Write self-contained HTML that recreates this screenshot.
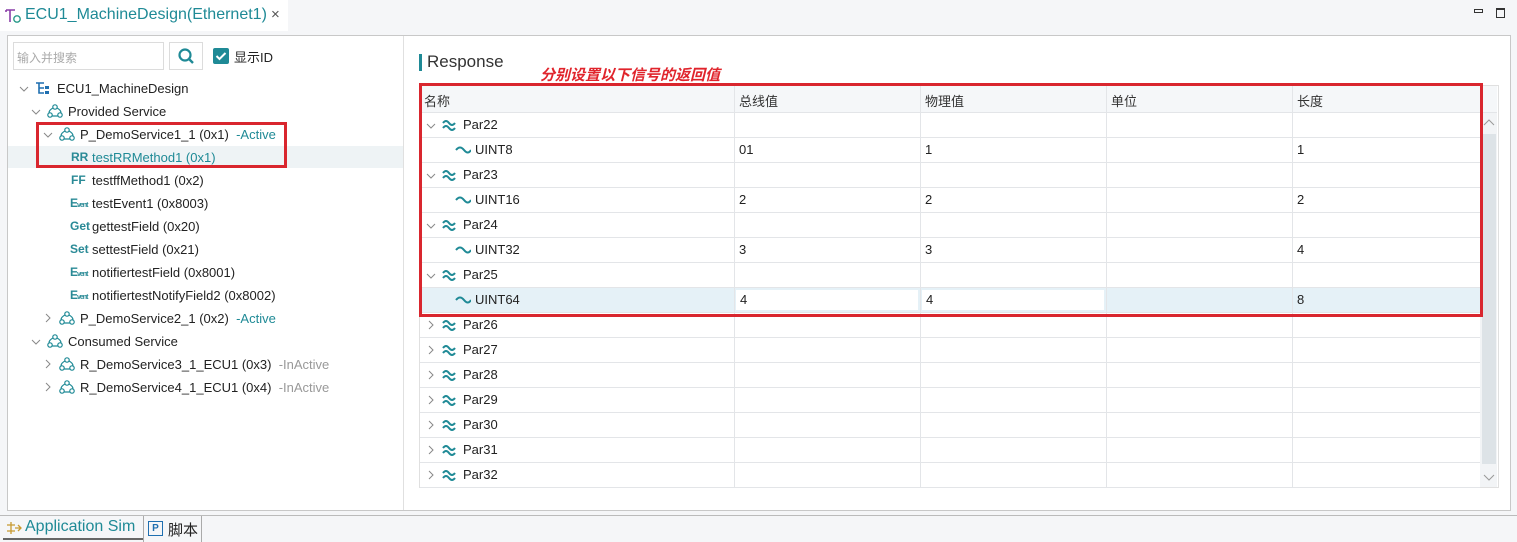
<!DOCTYPE html>
<html><head><meta charset="utf-8"><style>
*{box-sizing:border-box;margin:0;padding:0}
body{width:1517px;height:542px;overflow:hidden;background:#f5f6f8;font-family:"Liberation Sans","Noto Sans CJK SC",sans-serif;font-size:13px;color:#222;position:relative}
.a{position:absolute;white-space:nowrap}
.tr{position:absolute;height:23px;line-height:23px;white-space:nowrap}
.chev{position:absolute}
.row{position:absolute;left:420px;width:1060px;height:25px;border-bottom:1px solid #e3e5e8;line-height:24px}
.row .c{position:absolute;top:0;height:24px;border-left:1px solid #e3e5e8}
.lbl{font-weight:bold;color:#2a8a96;font-size:12px;position:absolute}
.ev{font-weight:bold;color:#2a8a96;font-size:12px;position:absolute;letter-spacing:-1px}
</style></head><body>
<svg width="0" height="0" style="position:absolute"><defs><g id="sv"><circle cx="8" cy="4" r="2.2" stroke="#1f8a96" fill="none" stroke-width="1.2"/><circle cx="3" cy="12" r="2.2" stroke="#1f8a96" fill="none" stroke-width="1.2"/><circle cx="13" cy="12" r="2.2" stroke="#1f8a96" fill="none" stroke-width="1.2"/><path d="M6 5Q2 7 2 10M10 5Q14 7 14 10M5 13h6" stroke="#1f8a96" fill="none" stroke-width="1.2"/></g>
<g id="w2"><path d="M1 5q3-4 6 0t6 0M1 10q3-4 6 0t6 0" stroke="#1f8a96" stroke-width="2" fill="none"/></g>
<g id="w1"><path d="M1 7q4-5 8 0t7 0" stroke="#1f8a96" stroke-width="2" fill="none"/></g>
<path id="cd" d="M1 3l4 4 4-4" stroke="#888" fill="none" stroke-width="1"/>
<path id="cr" d="M3 1l4 4-4 4" stroke="#888" fill="none" stroke-width="1"/></defs></svg>
<!-- top tab -->
<div class="a" style="left:0;top:0;width:288px;height:31px;background:#fff"></div>
<svg class="a" style="left:5px;top:8px" width="16" height="16"><path d="M1 2h9M5 2v12M1 2v2" stroke="#8a3ea8" stroke-width="1.6" fill="none"/><circle cx="12" cy="11" r="3.2" stroke="#2a9a8a" stroke-width="1.4" fill="none"/></svg>
<div class="a" style="left:25px;top:6px;font-size:16px;color:#1f8a96">ECU1_MachineDesign(Ethernet1)</div>
<div class="a" style="left:271px;top:6px;font-size:15px;color:#555">×</div>
<div class="a" style="left:1474px;top:9px;width:9px;height:4px;border:1px solid #333"></div>
<div class="a" style="left:1496px;top:8px;width:9px;height:10px;border:1px solid #333;border-top-width:2px"></div>
<!-- main frame -->
<div class="a" style="left:7px;top:35px;width:1504px;height:476px;background:#fff;border:1px solid #c8c8c8"></div>
<div class="a" style="left:403px;top:36px;width:1px;height:474px;background:#e0e0e0"></div>
<!-- search -->
<div class="a" style="left:13px;top:42px;width:151px;height:28px;border:1px solid #dcdcdc;color:#aaa;padding:6px 3px;font-size:12px">输入并搜索</div>
<div class="a" style="left:169px;top:42px;width:34px;height:28px;border:1px solid #dcdcdc"></div>
<svg class="a" style="left:177px;top:47px" width="18" height="18"><circle cx="8" cy="8" r="5.5" stroke="#1f8a96" stroke-width="2.2" fill="none"/><path d="M12 12l4 4" stroke="#1f8a96" stroke-width="2.4"/></svg>
<div class="a" style="left:213px;top:48px;width:16px;height:16px;background:#1f8a96;border-radius:2px"></div>
<svg class="a" style="left:213px;top:48px" width="16" height="16"><path d="M3.5 8l3 3 6-6" stroke="#fff" stroke-width="2" fill="none"/></svg>
<div class="a" style="left:234px;top:47px">显示ID</div>
<!-- tree -->
<div class="a" style="left:8px;top:146px;width:395px;height:22px;background:#eef3f5"></div>
<div class="a" style="left:36px;top:122px;width:251px;height:46px;border:3px solid #d9262e"></div>
<svg class="chev" style="left:19px;top:84px" width="10" height="10"><use href="#cd"/></svg>
<svg class="a" style="left:35px;top:81px" width="16" height="14"><path d="M1 2h8M4 2v10h5M4 7h5" stroke="#1f6fb0" stroke-width="1.6" fill="none"/><rect x="10" y="5" width="4" height="3" fill="#1f6fb0"/><rect x="10" y="10" width="4" height="3" fill="#1f6fb0"/></svg>
<div class="tr" style="left:57px;top:77px">ECU1_MachineDesign</div>
<svg class="chev" style="left:31px;top:107px" width="10" height="10"><use href="#cd"/></svg>
<svg class="a" style="left:47px;top:103px" width="16" height="16"><use href="#sv"/></svg>
<div class="tr" style="left:68px;top:100px">Provided Service</div>
<svg class="chev" style="left:43px;top:130px" width="10" height="10"><use href="#cd"/></svg>
<svg class="a" style="left:59px;top:126px" width="16" height="16"><use href="#sv"/></svg>
<div class="tr" style="left:80px;top:123px">P_DemoService1_1 (0x1) &nbsp;<span style="color:#1f8a96">-Active</span></div>
<span class="lbl" style="left:71px;top:150px">RR</span><div class="tr" style="left:92px;top:146px;color:#1f8a96">testRRMethod1 (0x1)</div>
<span class="lbl" style="left:71px;top:173px">FF</span><div class="tr" style="left:92px;top:169px">testffMethod1 (0x2)</div>
<span class="ev" style="left:70px;top:196px">E<span style="font-size:7px">vent</span></span><div class="tr" style="left:92px;top:192px">testEvent1 (0x8003)</div>
<span class="lbl" style="left:70px;top:219px">Get</span><div class="tr" style="left:92px;top:215px">gettestField (0x20)</div>
<span class="lbl" style="left:70px;top:242px">Set</span><div class="tr" style="left:92px;top:238px">settestField (0x21)</div>
<span class="ev" style="left:70px;top:265px">E<span style="font-size:7px">vent</span></span><div class="tr" style="left:92px;top:261px">notifiertestField (0x8001)</div>
<span class="ev" style="left:70px;top:288px">E<span style="font-size:7px">vent</span></span><div class="tr" style="left:92px;top:284px">notifiertestNotifyField2 (0x8002)</div>
<svg class="chev" style="left:43px;top:313px" width="10" height="10"><use href="#cr"/></svg>
<svg class="a" style="left:59px;top:310px" width="16" height="16"><use href="#sv"/></svg>
<div class="tr" style="left:80px;top:307px">P_DemoService2_1 (0x2) &nbsp;<span style="color:#1f8a96">-Active</span></div>
<svg class="chev" style="left:31px;top:337px" width="10" height="10"><use href="#cd"/></svg>
<svg class="a" style="left:47px;top:333px" width="16" height="16"><use href="#sv"/></svg>
<div class="tr" style="left:68px;top:330px">Consumed Service</div>
<svg class="chev" style="left:43px;top:359px" width="10" height="10"><use href="#cr"/></svg>
<svg class="a" style="left:59px;top:356px" width="16" height="16"><use href="#sv"/></svg>
<div class="tr" style="left:80px;top:353px">R_DemoService3_1_ECU1 (0x3) &nbsp;<span style="color:#999">-InActive</span></div>
<svg class="chev" style="left:43px;top:382px" width="10" height="10"><use href="#cr"/></svg>
<svg class="a" style="left:59px;top:379px" width="16" height="16"><use href="#sv"/></svg>
<div class="tr" style="left:80px;top:376px">R_DemoService4_1_ECU1 (0x4) &nbsp;<span style="color:#999">-InActive</span></div>
<!-- right -->
<div class="a" style="left:419px;top:54px;width:3px;height:17px;background:#1f8a96"></div>
<div class="a" style="left:427px;top:52px;font-size:17px;color:#333">Response</div>
<div class="a" style="left:540px;top:64px;font-size:15px;font-weight:bold;font-style:italic;color:#e0242c">分别设置以下信号的返回值</div>
<div class="a" style="left:419px;top:85px;width:1080px;height:403px;border:1px solid #e0e0e0"></div>
<div class="a" style="left:420px;top:86px;width:1077px;height:27px;background:#f5f7f9;border-bottom:1px solid #e3e5e8"></div>
<div class="a" style="left:424px;top:91px;color:#333">名称</div>
<div class="a" style="left:734px;top:86px;height:27px;border-left:1px solid #e3e5e8;padding:5px 4px;color:#333">总线值</div>
<div class="a" style="left:920px;top:86px;height:27px;border-left:1px solid #e3e5e8;padding:5px 4px;color:#333">物理值</div>
<div class="a" style="left:1106px;top:86px;height:27px;border-left:1px solid #e3e5e8;padding:5px 4px;color:#333">单位</div>
<div class="a" style="left:1292px;top:86px;height:27px;border-left:1px solid #e3e5e8;padding:5px 4px;color:#333">长度</div>
<!-- rows -->
<div class="row" style="top:113px"><svg class="chev" style="left:6px;top:8px" width="10" height="10"><use href="#cd"/></svg><svg class="a" style="left:22px;top:5px" width="16" height="14"><use href="#w2"/></svg><span class="a" style="left:43px">Par22</span><div class="c" style="left:314px"></div><div class="c" style="left:500px"></div><div class="c" style="left:686px"></div><div class="c" style="left:872px"></div></div>
<div class="row" style="top:138px"><svg class="a" style="left:35px;top:5px" width="16" height="14"><use href="#w1"/></svg><span class="a" style="left:55px">UINT8</span><div class="c" style="left:314px;padding-left:4px">01</div><div class="c" style="left:500px;padding-left:4px">1</div><div class="c" style="left:686px"></div><div class="c" style="left:872px;padding-left:4px">1</div></div>
<div class="row" style="top:163px"><svg class="chev" style="left:6px;top:8px" width="10" height="10"><use href="#cd"/></svg><svg class="a" style="left:22px;top:5px" width="16" height="14"><use href="#w2"/></svg><span class="a" style="left:43px">Par23</span><div class="c" style="left:314px"></div><div class="c" style="left:500px"></div><div class="c" style="left:686px"></div><div class="c" style="left:872px"></div></div>
<div class="row" style="top:188px"><svg class="a" style="left:35px;top:5px" width="16" height="14"><use href="#w1"/></svg><span class="a" style="left:55px">UINT16</span><div class="c" style="left:314px;padding-left:4px">2</div><div class="c" style="left:500px;padding-left:4px">2</div><div class="c" style="left:686px"></div><div class="c" style="left:872px;padding-left:4px">2</div></div>
<div class="row" style="top:213px"><svg class="chev" style="left:6px;top:8px" width="10" height="10"><use href="#cd"/></svg><svg class="a" style="left:22px;top:5px" width="16" height="14"><use href="#w2"/></svg><span class="a" style="left:43px">Par24</span><div class="c" style="left:314px"></div><div class="c" style="left:500px"></div><div class="c" style="left:686px"></div><div class="c" style="left:872px"></div></div>
<div class="row" style="top:238px"><svg class="a" style="left:35px;top:5px" width="16" height="14"><use href="#w1"/></svg><span class="a" style="left:55px">UINT32</span><div class="c" style="left:314px;padding-left:4px">3</div><div class="c" style="left:500px;padding-left:4px">3</div><div class="c" style="left:686px"></div><div class="c" style="left:872px;padding-left:4px">4</div></div>
<div class="row" style="top:263px"><svg class="chev" style="left:6px;top:8px" width="10" height="10"><use href="#cd"/></svg><svg class="a" style="left:22px;top:5px" width="16" height="14"><use href="#w2"/></svg><span class="a" style="left:43px">Par25</span><div class="c" style="left:314px"></div><div class="c" style="left:500px"></div><div class="c" style="left:686px"></div><div class="c" style="left:872px"></div></div>
<div class="row" style="top:288px;background:#e5f1f7"><svg class="a" style="left:35px;top:5px" width="16" height="14"><use href="#w1"/></svg><span class="a" style="left:55px">UINT64</span><div class="c" style="left:314px"></div><div class="a" style="left:316px;top:2px;width:182px;height:20px;background:#fff;line-height:20px;padding-left:4px">4</div><div class="c" style="left:500px"></div><div class="a" style="left:502px;top:2px;width:182px;height:20px;background:#fff;line-height:20px;padding-left:4px">4</div><div class="c" style="left:686px"></div><div class="c" style="left:872px;padding-left:4px">8</div></div>
<div class="row" style="top:313px"><svg class="chev" style="left:6px;top:7px" width="10" height="10"><use href="#cr"/></svg><svg class="a" style="left:22px;top:5px" width="16" height="14"><use href="#w2"/></svg><span class="a" style="left:43px">Par26</span><div class="c" style="left:314px"></div><div class="c" style="left:500px"></div><div class="c" style="left:686px"></div><div class="c" style="left:872px"></div></div>
<div class="row" style="top:338px"><svg class="chev" style="left:6px;top:7px" width="10" height="10"><use href="#cr"/></svg><svg class="a" style="left:22px;top:5px" width="16" height="14"><use href="#w2"/></svg><span class="a" style="left:43px">Par27</span><div class="c" style="left:314px"></div><div class="c" style="left:500px"></div><div class="c" style="left:686px"></div><div class="c" style="left:872px"></div></div>
<div class="row" style="top:363px"><svg class="chev" style="left:6px;top:7px" width="10" height="10"><use href="#cr"/></svg><svg class="a" style="left:22px;top:5px" width="16" height="14"><use href="#w2"/></svg><span class="a" style="left:43px">Par28</span><div class="c" style="left:314px"></div><div class="c" style="left:500px"></div><div class="c" style="left:686px"></div><div class="c" style="left:872px"></div></div>
<div class="row" style="top:388px"><svg class="chev" style="left:6px;top:7px" width="10" height="10"><use href="#cr"/></svg><svg class="a" style="left:22px;top:5px" width="16" height="14"><use href="#w2"/></svg><span class="a" style="left:43px">Par29</span><div class="c" style="left:314px"></div><div class="c" style="left:500px"></div><div class="c" style="left:686px"></div><div class="c" style="left:872px"></div></div>
<div class="row" style="top:413px"><svg class="chev" style="left:6px;top:7px" width="10" height="10"><use href="#cr"/></svg><svg class="a" style="left:22px;top:5px" width="16" height="14"><use href="#w2"/></svg><span class="a" style="left:43px">Par30</span><div class="c" style="left:314px"></div><div class="c" style="left:500px"></div><div class="c" style="left:686px"></div><div class="c" style="left:872px"></div></div>
<div class="row" style="top:438px"><svg class="chev" style="left:6px;top:7px" width="10" height="10"><use href="#cr"/></svg><svg class="a" style="left:22px;top:5px" width="16" height="14"><use href="#w2"/></svg><span class="a" style="left:43px">Par31</span><div class="c" style="left:314px"></div><div class="c" style="left:500px"></div><div class="c" style="left:686px"></div><div class="c" style="left:872px"></div></div>
<div class="row" style="top:463px"><svg class="chev" style="left:6px;top:7px" width="10" height="10"><use href="#cr"/></svg><svg class="a" style="left:22px;top:5px" width="16" height="14"><use href="#w2"/></svg><span class="a" style="left:43px">Par32</span><div class="c" style="left:314px"></div><div class="c" style="left:500px"></div><div class="c" style="left:686px"></div><div class="c" style="left:872px"></div></div>
<!-- scrollbar -->
<div class="a" style="left:1480px;top:113px;width:17px;height:374px;background:#f2f4f6"></div>
<div class="a" style="left:1482px;top:134px;width:14px;height:330px;background:#dde3e7"></div>
<svg class="a" style="left:1482px;top:117px" width="14" height="12"><path d="M2 8l5-5 5 5" stroke="#999" fill="none"/></svg>
<svg class="a" style="left:1482px;top:471px" width="14" height="12"><path d="M2 4l5 5 5-5" stroke="#999" fill="none"/></svg>
<!-- red box -->
<div class="a" style="left:419px;top:83px;width:1064px;height:234px;border:3px solid #d9262e"></div>
<!-- bottom tabs -->
<div class="a" style="left:0;top:515px;width:1517px;height:1px;background:#bbb"></div>
<div class="a" style="left:3px;top:516px;width:140px;height:24px;background:#f5f6f8;border-bottom:2px solid #666"></div>
<svg class="a" style="left:6px;top:520px" width="16" height="16"><path d="M1 5h8M1 11h8M5 2v12M9 8h6M12 5l3 3-3 3" stroke="#c89a30" stroke-width="1.3" fill="none"/></svg>
<div class="a" style="left:25px;top:518px;font-size:16px;color:#1f8a96">Application Sim</div>
<div class="a" style="left:143px;top:516px;width:59px;height:26px;border-left:1px solid #aaa;border-right:1px solid #aaa"></div>
<div class="a" style="left:148px;top:521px;width:15px;height:15px;border:1px solid #1f6fb0;color:#1f6fb0;font-size:10px;font-weight:bold;text-align:center;line-height:13px">P</div>
<div class="a" style="left:168px;top:519px;font-size:15px">脚本</div>
</body></html>
